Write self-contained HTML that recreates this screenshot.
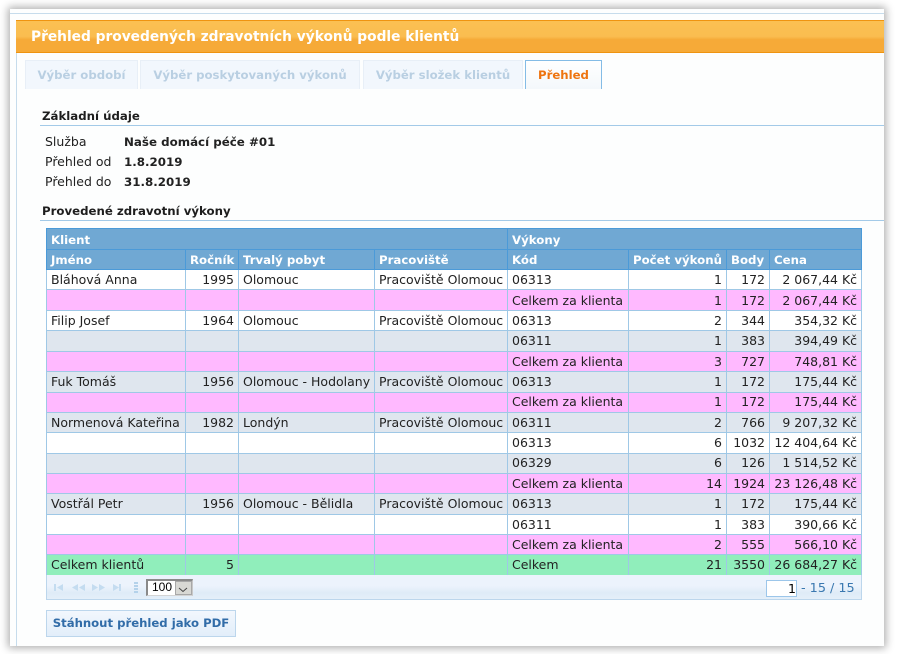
<!DOCTYPE html>
<html><head><meta charset="utf-8">
<style>
html,body{margin:0;padding:0;width:898px;height:654px;overflow:hidden;background:#fff;font-family:"DejaVu Sans","Liberation Sans",sans-serif;font-size:12.5px;color:#222}
.a{position:absolute;white-space:nowrap}
#panel{position:absolute;left:10px;top:9px;width:874px;height:637px;background:#fdfefe;box-shadow:0 0 8px 2px rgba(0,0,0,.32)}
#tl{position:absolute;left:10px;top:13px;width:874px;height:1px;background:#c6dcec}
#vl{position:absolute;left:16px;top:20px;width:1px;height:626px;background:#c6dcec}
#head{position:absolute;left:16px;top:20px;width:868px;height:33px;border-top:1px solid #ef9410;border-bottom:1px solid #ef9410;box-sizing:border-box;background:linear-gradient(#fbc052 0,#fabd50 50%,#f6aa38 60%,#f6aa38 100%);color:#fff;font-weight:bold;font-size:13.75px;line-height:33px;padding-left:15px}
.tab{position:absolute;top:60px;height:29px;box-sizing:border-box;background:#f2f7fd;border:1px solid #e8eff7;border-bottom:0;color:#b9cfe2;font-weight:bold;font-size:11.7px;line-height:29px;text-align:center}
.tab.on{background:linear-gradient(#fff,#f4f8fb);border-color:#84bce6;color:#ee7410}
.sec{position:absolute;left:42px;font-weight:bold;font-size:11.75px;color:#1e1e1e;white-space:nowrap}
.b{font-weight:bold;font-size:11.85px}
.ln{position:absolute;left:40px;width:844px;height:1px;background:#a3cae8}
table{position:absolute;left:46px;top:228px;width:815px;border-collapse:collapse;table-layout:fixed;font-size:12.5px}
td,th{border:1px solid #9fc8e6;padding:0 4px;overflow:hidden;white-space:nowrap;font-weight:normal;text-align:left;box-sizing:border-box}
th{background:#70a8d3;color:#fff;font-weight:bold;font-size:11.75px;border-color:#4b9ad8;padding-top:1px}
.r{text-align:right}
.u td{padding-bottom:2px}
.w td{background:#fff}.p td{background:#ffb9ff}.g td{background:#dfe6ee}.t td{background:#90eebb}
#pager{position:absolute;left:46px;top:575px;width:816px;height:25px;box-sizing:border-box;border:1px solid #bcd6ec;border-top:0;background:linear-gradient(#ecf3fc 0,#ecf3fc 45%,#deebf7 75%,#e4eff9 100%)}
#btn{position:absolute;left:46px;top:610px;width:190px;height:27px;box-sizing:border-box;border:1px solid #bcd6ec;background:linear-gradient(#f2f7fd,#e2eefa);color:#316ca8;font-weight:bold;font-size:11.67px;line-height:25px;text-align:center}
</style></head>
<body>
<div id="panel"></div><div id="tl"></div><div id="vl"></div>
<div id="head">Přehled provedených zdravotních výkonů podle klientů</div>
<div class="tab" style="left:25px;width:113px">Výběr období</div>
<div class="tab" style="left:140px;width:220px">Výběr poskytovaných výkonů</div>
<div class="tab" style="left:363px;width:160px">Výběr složek klientů</div>
<div class="tab on" style="left:525px;width:77px">Přehled</div>

<div class="sec" style="top:109px">Základní údaje</div>
<div class="ln" style="top:125px"></div>
<div class="a" style="left:45px;top:134px">Služba</div>
<div class="a b" style="left:124px;top:135px">Naše domácí péče #01</div>
<div class="a" style="left:45px;top:154px">Přehled od</div>
<div class="a b" style="left:124px;top:155px">1.8.2019</div>
<div class="a" style="left:45px;top:174px">Přehled do</div>
<div class="a b" style="left:124px;top:175px">31.8.2019</div>
<div class="sec" style="top:204px">Provedené zdravotní výkony</div>
<div class="ln" style="top:220px"></div>

<table>
<colgroup><col style="width:139px"><col style="width:53px"><col style="width:136px"><col style="width:133px"><col style="width:121px"><col style="width:98px"><col style="width:43px"><col style="width:92px"></colgroup>
<tr style="height:21px"><th colspan="4">Klient</th><th colspan="4">Výkony</th></tr>
<tr style="height:20px"><th>Jméno</th><th>Ročník</th><th>Trvalý pobyt</th><th>Pracoviště</th><th>Kód</th><th>Počet výkonů</th><th>Body</th><th>Cena</th></tr>
<tr class="w" style="height:20px"><td>Bláhová Anna</td><td class="r">1995</td><td>Olomouc</td><td>Pracoviště Olomouc</td><td>06313</td><td class="r">1</td><td class="r">172</td><td class="r">2 067,44 Kč</td></tr>
<tr class="p" style="height:21px"><td></td><td></td><td></td><td></td><td>Celkem za klienta</td><td class="r">1</td><td class="r">172</td><td class="r">2 067,44 Kč</td></tr>
<tr class="w" style="height:20px"><td>Filip Josef</td><td class="r">1964</td><td>Olomouc</td><td>Pracoviště Olomouc</td><td>06313</td><td class="r">2</td><td class="r">344</td><td class="r">354,32 Kč</td></tr>
<tr class="g u" style="height:21px"><td></td><td></td><td></td><td></td><td>06311</td><td class="r">1</td><td class="r">383</td><td class="r">394,49 Kč</td></tr>
<tr class="p" style="height:20px"><td></td><td></td><td></td><td></td><td>Celkem za klienta</td><td class="r">3</td><td class="r">727</td><td class="r">748,81 Kč</td></tr>
<tr class="g u" style="height:21px"><td>Fuk Tomáš</td><td class="r">1956</td><td>Olomouc - Hodolany</td><td>Pracoviště Olomouc</td><td>06313</td><td class="r">1</td><td class="r">172</td><td class="r">175,44 Kč</td></tr>
<tr class="p u" style="height:20px"><td></td><td></td><td></td><td></td><td>Celkem za klienta</td><td class="r">1</td><td class="r">172</td><td class="r">175,44 Kč</td></tr>
<tr class="g" style="height:20px"><td>Normenová Kateřina</td><td class="r">1982</td><td>Londýn</td><td>Pracoviště Olomouc</td><td>06311</td><td class="r">2</td><td class="r">766</td><td class="r">9 207,32 Kč</td></tr>
<tr class="w u" style="height:21px"><td></td><td></td><td></td><td></td><td>06313</td><td class="r">6</td><td class="r">1032</td><td class="r">12 404,64 Kč</td></tr>
<tr class="g u" style="height:20px"><td></td><td></td><td></td><td></td><td>06329</td><td class="r">6</td><td class="r">126</td><td class="r">1 514,52 Kč</td></tr>
<tr class="p" style="height:20px"><td></td><td></td><td></td><td></td><td>Celkem za klienta</td><td class="r">14</td><td class="r">1924</td><td class="r">23 126,48 Kč</td></tr>
<tr class="g u" style="height:21px"><td>Vostřál Petr</td><td class="r">1956</td><td>Olomouc - Bělidla</td><td>Pracoviště Olomouc</td><td>06313</td><td class="r">1</td><td class="r">172</td><td class="r">175,44 Kč</td></tr>
<tr class="w" style="height:20px"><td></td><td></td><td></td><td></td><td>06311</td><td class="r">1</td><td class="r">383</td><td class="r">390,66 Kč</td></tr>
<tr class="p" style="height:20px"><td></td><td></td><td></td><td></td><td>Celkem za klienta</td><td class="r">2</td><td class="r">555</td><td class="r">566,10 Kč</td></tr>
<tr class="t u" style="height:21px"><td>Celkem klientů</td><td class="r">5</td><td></td><td></td><td>Celkem</td><td class="r">21</td><td class="r">3550</td><td class="r">26 684,27 Kč</td></tr>
</table>

<div id="pager"></div>
<svg class="a" style="left:52px;top:582px" width="90" height="12" viewBox="0 0 90 12" fill="#c4dcf0">
<rect x="2" y="2" width="2" height="7"/><path d="M11 2v7L5 5.500z"/>
<path d="M26 2v7L20 5.500zM33 2v7L27 5.500z"/>
<path d="M40 2v7l6-3.500zM47 2v7l6-3.500z"/>
<path d="M61 2v7l6-3.500z"/><rect x="67" y="2" width="2" height="7"/>
<g fill="#b4d2ea"><rect x="82" y="0" width="4" height="2"/><rect x="82" y="3" width="4" height="2"/><rect x="82" y="6" width="4" height="2"/><rect x="82" y="9" width="4" height="2"/></g>
</svg>
<div class="a" style="left:146px;top:579px;width:47px;height:17px;box-sizing:border-box;border:1px solid #8a8a8a;border-top:2px solid #8a8a8a;border-left:2px solid #8a8a8a;border-right:1px solid #c8c8c8;border-bottom:1px solid #d4d4d4;background:#fff;font-size:12px;line-height:13px;color:#000;padding-left:4px;font-family:'Liberation Sans',sans-serif">100</div>
<svg class="a" style="left:175px;top:581px" width="17" height="14" viewBox="0 0 17 14"><rect x=".5" y=".5" width="16" height="13" fill="#d8d8d4" stroke="#a8a8a8"/><path d="M4 7l4 3.500L12 7" fill="none" stroke="#444" stroke-width="1"/></svg>
<div class="a" style="left:766px;top:580px;width:31px;height:17px;box-sizing:border-box;border:1px solid #9cc6ea;background:#fff;color:#000;text-align:right;font-size:12.5px;line-height:15px;padding-right:0">1</div>
<div class="a" style="left:801px;top:581px;color:#3a78b0;font-size:12.8px">- 15 / 15</div>
<div id="btn">Stáhnout přehled jako PDF</div>
</body></html>
